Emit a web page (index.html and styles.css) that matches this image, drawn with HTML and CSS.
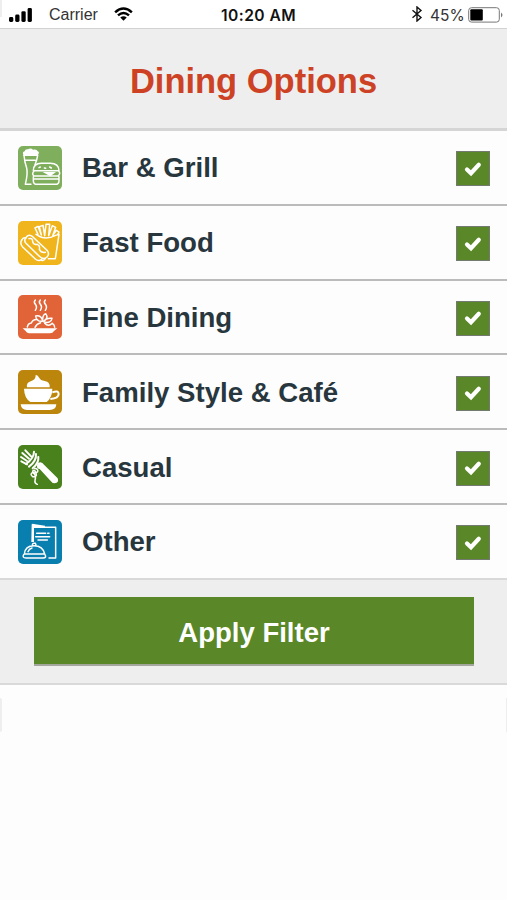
FILE: index.html
```html
<!DOCTYPE html>
<html lang="en">
<head>
<meta charset="utf-8">
<title>Dining Options</title>
<link rel="stylesheet" href="styles.css">
</head>
<body>
<div class="status">
  <svg class="signal" viewBox="0 0 24 15"><rect x="0" y="10" width="4.3" height="5" rx="1.4"/><rect x="6.2" y="7.5" width="4.3" height="7.5" rx="1.4"/><rect x="12.4" y="4.2" width="4.3" height="10.8" rx="1.4"/><rect x="18.6" y="1" width="4.3" height="14" rx="1.4"/></svg>
  <span class="carrier">Carrier</span>
  <svg class="wifi" viewBox="0 0 20 14"><path d="M1.2 5.2Q10-2.8 18.8 5.2M4.2 8.4Q10 3.4 15.8 8.4" fill="none" stroke="#000" stroke-width="2.6"/><path d="M6.6 10.7Q10 8 13.4 10.7L10 14Z"/></svg>
  <span class="time">10:20 AM</span>
  <svg class="bluetooth" viewBox="0 0 12 16"><path d="M1.5 4.3L10 11.5 6 15V1L10 4.5 1.5 11.8" fill="none" stroke="#111" stroke-width="1.4"/></svg>
  <span class="percent">45%</span>
  <svg class="battery" viewBox="0 0 36 16"><rect x=".7" y=".7" width="30.6" height="14.4" rx="2.8" fill="#fff" stroke="#777" stroke-width="1"/><rect x="2.3" y="2.3" width="12.5" height="11.2" rx="1"/><path d="M33 5.5Q36 8 33 10.5Z" fill="#777"/></svg>
</div>
<header class="header"><h1>Dining Options</h1></header>
<main class="list">
  <label class="row">
    <svg class="icon" viewBox="24 24 132 132"><rect class="bar" x="24" y="24" width="132" height="132" rx="15"/>
      <path class="f" d="M40 50Q36 42 44 40Q45 33 54 34Q62 28 69 35Q80 32 83 40Q90 43 84 50V54H40Z"/>
      <path class="l" d="M42 52Q43 70 50 90Q54 106 46 139H63M83 52Q81 66 75 80M47 67H76"/>
      <path class="l" d="M70 98Q70 76 94 76H121Q146 76 147 98ZM72 99Q64 108 72 114H144Q153 107 146 99M70 116V128Q70 139 81 139H136Q147 139 147 128V116M70 123H147"/>
      <path class="f" d="M98 102H138L121 115Z"/><path class="l" d="M87 89l4-2M103 90l4 1M119 87l5 3"/>
    </svg><span class="name">Bar &amp; Grill</span>
    <span class="check"><svg viewBox="0 0 18 16"><path d="M3 8.4L7 12.2 14.8 3.8"/></svg></span>
  </label>
  <label class="row">
    <svg class="icon" viewBox="24 24 132 132"><rect class="fast" x="24" y="24" width="132" height="132" rx="15"/>
      <path class="l" d="M36 80Q28 91 38 102L76 138Q86 147 95 139M49 72Q57 62 68 71L111 112Q120 123 111 132Q100 142 88 130L48 91Q40 82 49 72Z"/>
      <path class="l" d="M36 80Q40 73 48 75M106 137Q101 145 94 141M57 77Q68 74 68 86Q70 96 82 94Q91 98 88 109Q93 120 106 118"/>
      <path class="l" d="M78 64L86 69Q108 82 137 67L147 64L136 137H115M84 64L75 45L84 40L94 66L88 41L99 37L104 68L108 34H119L116 68L127 38L137 43L128 68L139 52L147 57L143 65"/>
    </svg><span class="name">Fast Food</span>
    <span class="check"><svg viewBox="0 0 18 16"><path d="M3 8.4L7 12.2 14.8 3.8"/></svg></span>
  </label>
  <label class="row">
    <svg class="icon" viewBox="24 24 132 132"><rect class="fine" x="24" y="24" width="132" height="132" rx="15"/>
      <path class="f" d="M38 124H142L132 132Q129 139 119 139H62Q50 139 47 132Z"/>
      <path class="l" d="M76 39Q70 45 76 52Q83 60 76 70M91 39Q85 45 91 52Q98 60 91 70M106 39Q100 45 106 52Q113 60 106 70"/>
      <path class="l" d="M52 120Q54 109 64 108Q69 96 83 98M97 103Q79 104 77 87Q93 84 98 101Q97 84 107 80Q117 93 101 103Q109 92 126 94Q123 110 102 105M75 121Q80 110 92 107M104 109Q115 121 127 109Q134 113 134 121"/>
    </svg><span class="name">Fine Dining</span>
    <span class="check"><svg viewBox="0 0 18 16"><path d="M3 8.4L7 12.2 14.8 3.8"/></svg></span>
  </label>
  <label class="row">
    <svg class="icon" viewBox="24 24 132 132"><rect class="cafe" x="24" y="24" width="132" height="132" rx="15"/>
      <path class="f" d="M51 76Q48 63 62 58Q78 53 77 39Q83 38 88 48Q91 55 104 57Q121 60 119 76ZM42 80H127Q127 106 110 120H61Q43 108 42 80ZM32 127H139Q138 144 119 144H51Q34 144 32 127Z"/>
      <path class="cup" d="M127 91Q146 84 146 96Q146 109 121 111"/>
    </svg><span class="name">Family Style &amp; Café</span>
    <span class="check"><svg viewBox="0 0 18 16"><path d="M3 8.4L7 12.2 14.8 3.8"/></svg></span>
  </label>
  <label class="row">
    <svg class="icon" viewBox="24 24 132 132"><rect class="casual" x="24" y="24" width="132" height="132" rx="15"/>
      <path class="f" d="M83 78Q95 71 102 83L143 124Q148 137 134 139Q126 139 120 130L89 96Q76 95 83 78Z"/>
      <path class="fork" d="M46 40L64 59M37 48L57 65M33 60L51 72M34 73L51 82"/>
      <path class="fork" d="M72 44Q72 63 48 81M78 51Q80 72 57 89M85 60Q87 78 68 94"/>
      <path class="l" d="M74 94Q86 96 83 104Q73 113 68 103Q72 94 78 108Q83 120 68 119Q59 112 67 107Q80 112 75 130Q73 139 82 142"/>
    </svg><span class="name">Casual</span>
    <span class="check"><svg viewBox="0 0 18 16"><path d="M3 8.4L7 12.2 14.8 3.8"/></svg></span>
  </label>
  <label class="row">
    <svg class="icon" viewBox="24 24 132 132"><rect class="other" x="24" y="24" width="132" height="132" rx="15"/>
      <path class="f" d="M65 37Q67 34 76 37L105 41V48H72V90H64Z"/>
      <path class="l" d="M70 46H137V138H117M80 64H107M113 64H117M77 74H119M84 84H112"/>
      <path class="l" d="M43 126Q45 101 72 101Q99 101 104 126ZM67 99Q68 92 76 94L78 99M54 119Q57 111 66 108M41 128Q36 138 48 138H99Q111 137 105 128"/>
    </svg><span class="name">Other</span>
    <span class="check"><svg viewBox="0 0 18 16"><path d="M3 8.4L7 12.2 14.8 3.8"/></svg></span>
  </label>
</main>
<footer class="footer"><button class="apply" type="button">Apply Filter</button></footer>
<div class="edges"><span class="edge-left"></span><span class="edge-right"></span></div>
</body>
</html>
```
FILE: styles.css
```css
* { box-sizing: border-box; }
body { margin: 0; width: 507px; height: 900px; overflow: hidden; background: #fdfdfd; font-family: "Liberation Sans", sans-serif; color: #28363e; }
.status { display: flex; align-items: center; height: 28px; padding-left: 9px; background: linear-gradient(90deg, #eee 2px, transparent 2px) 0 0 / 100% 17px no-repeat, #fff; color: #111; white-space: nowrap; }
.signal { width: 24px; height: 15px; margin-right: 16px; }
.carrier { width: 49px; font-size: 16px; color: #333; margin-right: 16px; padding-top: 2px; }
.wifi { width: 19px; height: 14px; margin-right: 88px; }
.time { width: 76px; font: 600 15.6px Inter, sans-serif; letter-spacing: .45px; margin-right: 114px; padding-top: 2px; }
.bluetooth { width: 12px; height: 16px; margin-right: 7px; }
.percent { width: 34px; font: 400 15.5px Inter, sans-serif; color: #333; margin-right: 4px; padding-top: 2px; }
.battery { width: 36px; height: 16px; flex: none; margin-top: 1px; }
.header { height: 103px; border-top: 1px solid #d2d2d2; border-bottom: 3px solid #d5d5d5; background: #eee; display: flex; align-items: center; justify-content: center; }
h1 { margin: 5px 0 0; font-size: 34.5px; line-height: 40px; color: #cd4224; white-space: nowrap; }
.list { display: grid; grid-template-rows: repeat(6, 74.8px); height: 449px; }
.row { display: flex; align-items: center; padding: 0 17px 0 18px; border-bottom: 2px solid #bbb; }
.row:last-child { border-bottom-color: #d9d9d9; }
.icon { width: 44px; height: 44px; margin: 1px 20px 0 0; }
.name { flex: 1; font-size: 27.6px; font-weight: 700; line-height: 34px; padding-top: 2px; }
.check { display: flex; align-items: center; justify-content: center; width: 34px; height: 35px; margin-top: 3px; background: #5a8727; border: 1px solid #737b70; }
.check svg { width: 18px; height: 16px; fill: none; stroke: #fff; stroke-width: 4.2; stroke-linecap: round; }
.bar { fill: #7faf5d; } .fast { fill: #f0b51d; } .fine { fill: #e06438; }
.cafe { fill: #bc860d; } .casual { fill: #49811d; } .other { fill: #087fae; }
.f { fill: #fff; }
.l { fill: none; stroke: #fff; stroke-width: 4.4; stroke-linecap: round; stroke-linejoin: round; }
.cup { fill: none; stroke: #fff; stroke-width: 6; }
.fork { fill: none; stroke: #fff; stroke-width: 6; stroke-linecap: round; }
.footer { height: 105px; padding: 17px 33px 0 34px; background: #eee; border-bottom: 2px solid #d9d9d9; }
.apply { display: block; width: 100%; height: 69px; margin: 0; padding: 5px 0 0; border: 0; border-bottom: 2px solid #a2a69c; background: #5a8727; color: #fff; font: 700 27.5px "Liberation Sans", sans-serif; }
.edges { display: flex; justify-content: space-between; height: 34px; margin-top: 13px; }
.edge-left { width: 2px; background: #eee; border-radius: 0 2px 2px 0; }
.edge-right { width: 1px; background: #eee; }
```
